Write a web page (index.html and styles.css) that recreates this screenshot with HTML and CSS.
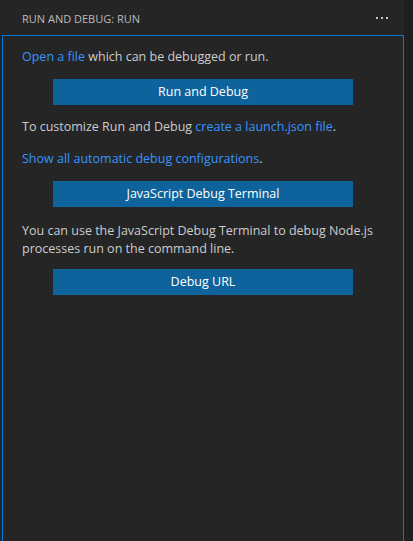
FILE: index.html
```html
<!DOCTYPE html>
<html>
<head>
<meta charset="utf-8">
<link rel="stylesheet" href="styles.css">
</head>
<body>
<div class="app">
  <div class="panel">
    <div class="header">
      <span class="title">Run and Debug: Run</span>
      <span class="more"><i></i><i></i><i></i></span>
    </div>
    <div class="view">
      <p class="p1"><a>Open a file</a> which can be debugged or run.</p>
      <div class="btn b1">Run and Debug</div>
      <p class="p2">To customize Run and Debug <a>create a launch.json file</a>.</p>
      <p class="p3"><a>Show all automatic debug configurations</a>.</p>
      <div class="btn b2">JavaScript Debug Terminal</div>
      <p class="p4">You can use the JavaScript Debug Terminal to debug Node.js processes run on the command line.</p>
      <div class="btn b3">Debug URL</div>
    </div>
  </div>
  <div class="strip"></div>
</div>
</body>
</html>
```
FILE: styles.css
```css
html, body {
  margin: 0;
  padding: 0;
  height: 100%;
  background: #252526;
  overflow: hidden;
}
.app {
  display: flex;
  height: 541px;
  font-family: "Open Sans", "Noto Sans", sans-serif;
  color: #cccccc;
}
.panel {
  width: 404px;
  display: flex;
  flex-direction: column;
  background: #252526;
}
.strip {
  flex: 1;
  background: #1f1f1f;
}
.header {
  height: 35px;
  display: flex;
  align-items: center;
  justify-content: space-between;
  padding: 0 16px 0 22px;
  box-sizing: border-box;
}
.title {
  font-size: 11px;
  text-transform: uppercase;
  color: #bbbbbb;
  padding-top: 1px;
}
.more {
  display: flex;
  gap: 3px;
  padding-top: 1px;
}
.more i {
  width: 2px;
  height: 2px;
  background: #c5c5c5;
  display: block;
}
.view {
  flex: 1;
  margin-left: 2px;
  border: 1px solid #0078d4;
  border-bottom: none;
  padding: 12px 19px 0 19px;
  display: flex;
  flex-direction: column;
  font-size: 12.5px;
  line-height: 18px;
}
.view p {
  margin: 0;
}
.view a {
  color: #3794ff;
}
.btn {
  align-self: center;
  width: 300px;
  height: 26px;
  background: #0e639c;
  color: #ffffff;
  display: flex;
  align-items: center;
  justify-content: center;
  font-size: 12.5px;
}
.b1 { margin-top: 13px; }
.p2 { margin-top: 13px !important; }
.p3 { margin-top: 14px !important; }
.b2 { margin-top: 13px; }
.p4 { margin-top: 15px !important; }
.b3 { margin-top: 11px; }
```
